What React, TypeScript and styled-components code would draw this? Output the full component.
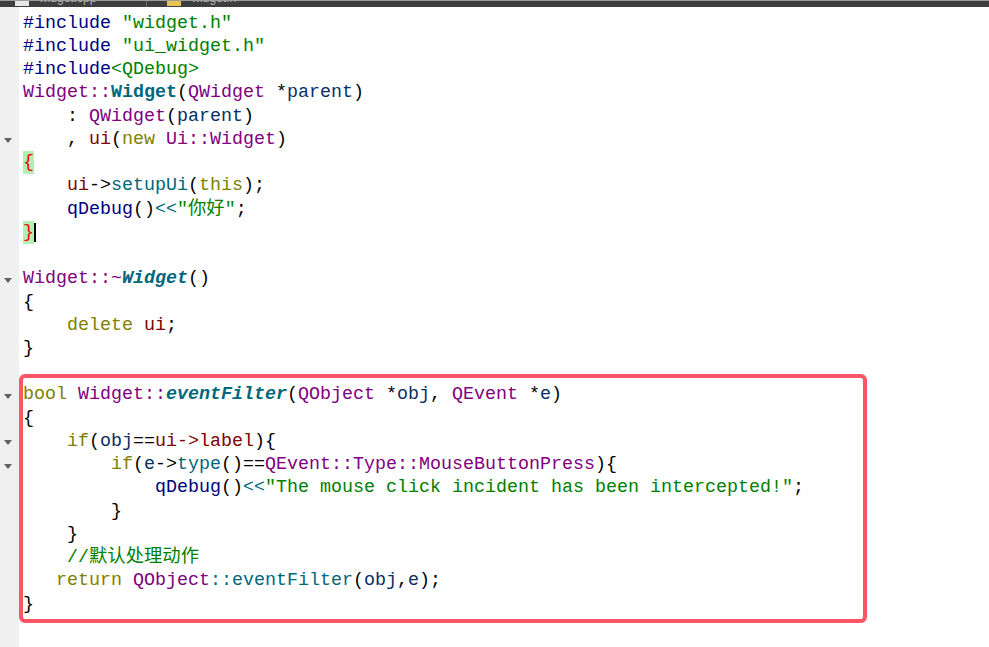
import React from 'react';
import styled, { createGlobalStyle, css } from 'styled-components';

type Kind =
  | 'plain'
  | 'pp'
  | 'str'
  | 'type'
  | 'decl'
  | 'declIt'
  | 'kw'
  | 'field'
  | 'fn'
  | 'param'
  | 'macro'
  | 'op'
  | 'comment'
  | 'brace';

type Token = [Kind, string];

const LINE_H = 23.28;

const GlobalStyle = createGlobalStyle`
  html, body {
    margin: 0;
    padding: 0;
    background: #ffffff;
  }
  #root {
    width: 989px;
    height: 647px;
    overflow: hidden;
  }
`;

const Window = styled.div`
  width: 989px;
  height: 647px;
  display: flex;
  flex-direction: column;
  background: #ffffff;
  overflow: hidden;
`;

const TabStrip = styled.div`
  height: 7px;
  flex-shrink: 0;
  display: flex;
  align-items: flex-end;
  gap: 10px;
  background: #3e3e3e;
  border-top: 1px solid #9c9c9c;
  box-sizing: border-box;
  overflow: hidden;
  padding-left: 15px;
`;

const TabIcon = styled.span<{ $tone: 'file' | 'header' }>`
  display: block;
  width: 14px;
  height: 5px;
  align-self: flex-start;
  background: ${({ $tone }) => ($tone === 'file' ? '#e6e6e6' : '#e8c25a')};
`;

const TabLabel = styled.span`
  display: block;
  align-self: flex-start;
  margin-top: -9px;
  font-family: 'Liberation Sans', Arial, sans-serif;
  font-size: 12px;
  line-height: 12px;
  color: #b8b8b8;
  white-space: nowrap;
`;

const TabSep = styled.span`
  display: block;
  width: 1px;
  height: 6px;
  background: #6a6a6a;
  margin: 0 10px 0 40px;
`;

const Body = styled.div`
  flex: 1;
  display: flex;
  min-height: 0;
`;

const Gutter = styled.div`
  width: 19px;
  flex-shrink: 0;
  background: #f0f0f0;
  padding-top: 4.5px;
`;

const GutterRow = styled.div`
  height: ${LINE_H}px;
  display: flex;
  align-items: center;
  padding-left: 4px;
`;

const FoldArrow = styled.span`
  width: 0;
  height: 0;
  border-left: 4px solid transparent;
  border-right: 4px solid transparent;
  border-top: 5px solid #606060;
  margin-top: 2px;
`;

const Editor = styled.div`
  flex: 1;
  padding: 4.5px 0 0 4px;
  font-family: 'Liberation Mono', 'Noto Sans CJK SC', monospace;
  font-size: 18.33px;
  color: #000000;
`;

const Line = styled.div`
  height: ${LINE_H}px;
  line-height: ${LINE_H}px;
  white-space: pre;
`;

const Annotated = styled.div`
  width: 848px;
  box-sizing: border-box;
  margin: -9.5px 0 0 -4px;
  padding: 5px 0 3px 0;
  border: 4px solid #fe5468;
  border-radius: 6px;
`;

const palette: Record<Kind, string> = {
  plain: '#000000',
  pp: '#000080',
  str: '#008000',
  type: '#800080',
  decl: '#00677c',
  declIt: '#00677c',
  kw: '#808000',
  field: '#800000',
  fn: '#00677c',
  param: '#092e64',
  macro: '#000080',
  op: '#00677c',
  comment: '#008000',
  brace: '#ff0000',
};

const Tok = styled.span<{ $kind: Kind }>`
  color: ${({ $kind }) => palette[$kind]};
  ${({ $kind }) =>
    ($kind === 'decl' || $kind === 'declIt') &&
    css`
      font-weight: bold;
    `}
  ${({ $kind }) =>
    $kind === 'declIt' &&
    css`
      font-style: italic;
    `}
  ${({ $kind }) =>
    $kind === 'brace' &&
    css`
      display: inline-block;
      height: ${LINE_H}px;
      background: #b4eeb4;
    `}
`;

const Caret = styled.span`
  display: inline-block;
  width: 2px;
  height: 19px;
  vertical-align: middle;
  background: #000000;
`;

const code: Token[][] = [
  [['pp', '#include'], ['plain', ' '], ['str', '"widget.h"']],
  [['pp', '#include'], ['plain', ' '], ['str', '"ui_widget.h"']],
  [['pp', '#include'], ['str', '<QDebug>']],
  [['type', 'Widget::'], ['decl', 'Widget'], ['plain', '('], ['type', 'QWidget'], ['plain', ' *'], ['param', 'parent'], ['plain', ')']],
  [['plain', '    : '], ['type', 'QWidget'], ['plain', '('], ['param', 'parent'], ['plain', ')']],
  [['plain', '    , '], ['field', 'ui'], ['plain', '('], ['kw', 'new'], ['plain', ' '], ['type', 'Ui::Widget'], ['plain', ')']],
  [['brace', '{']],
  [['plain', '    '], ['field', 'ui'], ['plain', '->'], ['fn', 'setupUi'], ['plain', '('], ['kw', 'this'], ['plain', ');']],
  [['plain', '    '], ['macro', 'qDebug'], ['plain', '()'], ['op', '<<'], ['str', '"你好"'], ['plain', ';']],
  [['brace', '}']],
  [],
  [['type', 'Widget::~'], ['declIt', 'Widget'], ['plain', '()']],
  [['plain', '{']],
  [['plain', '    '], ['kw', 'delete'], ['plain', ' '], ['field', 'ui'], ['plain', ';']],
  [['plain', '}']],
  [],
];

const filterCode: Token[][] = [
  [['kw', 'bool'], ['plain', ' '], ['type', 'Widget::'], ['declIt', 'eventFilter'], ['plain', '('], ['type', 'QObject'], ['plain', ' *'], ['param', 'obj'], ['plain', ', '], ['type', 'QEvent'], ['plain', ' *'], ['param', 'e'], ['plain', ')']],
  [['plain', '{']],
  [['plain', '    '], ['kw', 'if'], ['plain', '('], ['param', 'obj'], ['plain', '=='], ['field', 'ui->label'], ['plain', '){']],
  [['plain', '        '], ['kw', 'if'], ['plain', '('], ['param', 'e'], ['plain', '->'], ['fn', 'type'], ['plain', '()=='], ['type', 'QEvent::Type::MouseButtonPress'], ['plain', '){']],
  [['plain', '            '], ['macro', 'qDebug'], ['plain', '()'], ['op', '<<'], ['str', '"The mouse click incident has been intercepted!"'], ['plain', ';']],
  [['plain', '        }']],
  [['plain', '    }']],
  [['plain', '    '], ['comment', '//默认处理动作']],
  [['plain', '   '], ['kw', 'return'], ['plain', ' '], ['type', 'QObject'], ['fn', '::eventFilter'], ['plain', '('], ['param', 'obj'], ['plain', ','], ['param', 'e'], ['plain', ');']],
  [['plain', '}']],
];

// gutter rows that carry a fold marker
const foldRows = new Set([5, 11, 16, 18, 19]);
const caretRow = 9;

const renderLine = (tokens: Token[], row: number) => (
  <Line key={row}>
    {tokens.map(([kind, text], i) => (
      <Tok key={i} $kind={kind}>
        {text}
      </Tok>
    ))}
    {row === caretRow && <Caret />}
  </Line>
);

const App: React.FC = () => {
  const total = code.length + filterCode.length + 2;

  return (
    <>
      <GlobalStyle />
      <Window>
        <TabStrip>
          <TabIcon $tone="file" />
          <TabLabel>widget.cpp</TabLabel>
          <TabSep />
          <TabIcon $tone="header" />
          <TabLabel>widget.h</TabLabel>
        </TabStrip>
        <Body>
          <Gutter>
            {Array.from({ length: total }, (_, i) => (
              <GutterRow key={i}>{foldRows.has(i) && <FoldArrow />}</GutterRow>
            ))}
          </Gutter>
          <Editor>
            {code.map((tokens, i) => renderLine(tokens, i))}
            <Annotated>
              {filterCode.map((tokens, i) => renderLine(tokens, code.length + i))}
            </Annotated>
          </Editor>
        </Body>
      </Window>
    </>
  );
};

export default App;
